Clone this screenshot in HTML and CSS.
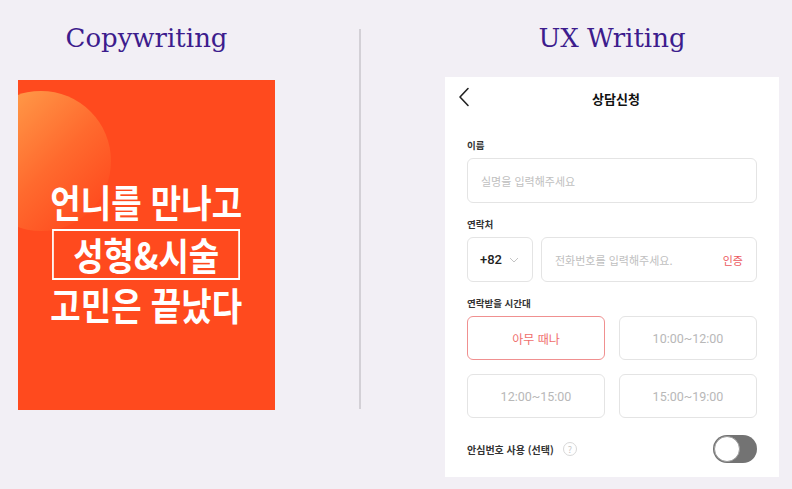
FILE: index.html
```html
<!DOCTYPE html>
<html lang="ko">
<head>
    <meta charset="UTF-8">
    <meta name="viewport" content="width=device-width, initial-scale=1.0">
    <title>Copywriting vs UX Writing</title>
    <link rel="stylesheet" href="styles.css">
</head>
<body>
    <div class="page">
        <!-- Copywriting -->
        <section class="col-left">
            <h1 class="title">Copywriting</h1>
            <div class="ad-card">
                <div class="ad-text">
                    <div class="ad-line">언니를 만나고</div>
                    <div class="ad-box">성형&amp;시술</div>
                    <div class="ad-line">고민은 끝났다</div>
                </div>
            </div>
        </section>

        <div class="divider"></div>

        <!-- UX Writing -->
        <section class="col-right">
            <h1 class="title">UX Writing</h1>
            <div class="form-card">
                <div class="form-header">
                    <svg class="back" width="12" height="20" viewBox="0 0 12 20">
                        <path d="M10 1.5 L2 10 L10 18.5" fill="none" stroke="#222" stroke-width="1.6" stroke-linecap="round" stroke-linejoin="round"/>
                    </svg>
                    <div class="form-title">상담신청</div>
                </div>

                <div class="label first">이름</div>
                <div class="field">실명을 입력해주세요</div>

                <div class="label">연락처</div>
                <div class="phone-row">
                    <div class="field code">
                        <span>+82</span>
                        <svg width="10" height="6" viewBox="0 0 10 6">
                            <path d="M1 1 L5 5 L9 1" fill="none" stroke="#c4c4c4" stroke-width="1"/>
                        </svg>
                    </div>
                    <div class="field phone">
                        <span>전화번호를 입력해주세요.</span>
                        <span class="verify">인증</span>
                    </div>
                </div>

                <div class="label">연락받을 시간대</div>
                <div class="time-grid">
                    <div class="time selected">아무 때나</div>
                    <div class="time">10:00~12:00</div>
                    <div class="time">12:00~15:00</div>
                    <div class="time">15:00~19:00</div>
                </div>

                <div class="safe-row">
                    <div class="safe-label">
                        안심번호 사용 (선택)
                        <span class="help">?</span>
                    </div>
                    <div class="toggle"><span class="knob"></span></div>
                </div>
            </div>
        </section>
    </div>
</body>
</html>
```

FILE: styles.css
```css
body {
    margin: 0;
    background-color: #f2eff5;
    font-family: "Noto Sans CJK KR", "Noto Sans", sans-serif;
}
.page {
    display: flex;
    align-items: flex-start;
    padding-left: 18px;
}
.title {
    margin: 20px 0 0 0;
    font-family: "DejaVu Serif", serif;
    font-weight: normal;
    font-size: 26px;
    line-height: 36px;
    color: #3d1c8d;
    text-align: center;
}

/* left */
.col-left {
    width: 257px;
}
.ad-card {
    position: relative;
    overflow: hidden;
    margin-top: 24px;
    height: 330px;
    background-color: #ff4a1e;
    display: flex;
    align-items: center;
    justify-content: center;
}
.ad-card::before {
    content: "";
    position: absolute;
    left: -47px;
    top: 11px;
    width: 140px;
    height: 140px;
    border-radius: 50%;
    background: linear-gradient(135deg, #ff9a48 15%, #ff6a2e 55%, #ff4e20 85%);
}
.ad-text {
    position: relative;
    display: flex;
    flex-direction: column;
    align-items: center;
    padding-top: 14px;
    color: #fff;
    font-weight: bold;
    font-size: 38px;
    transform: scaleX(0.87);
}
.ad-line {
    line-height: 40px;
}
.ad-box {
    margin: 8px 0 4px 0;
    width: 212px;
    height: 47px;
    border: 2px solid #fff;
    line-height: 46px;
    text-align: center;
}

.divider {
    width: 2px;
    height: 380px;
    margin: 29px 0 0 84px;
    background-color: #d3d0d6;
}

/* right */
.col-right {
    width: 334px;
    margin-left: 84px;
}
.form-card {
    margin-top: 21px;
    background-color: #fff;
    padding: 0 22px 14px 22px;
}
.form-header {
    position: relative;
    height: 42px;
    display: flex;
    align-items: center;
    justify-content: center;
}
.back {
    position: absolute;
    left: -9px;
    top: 10px;
}
.form-title {
    font-size: 13px;
    font-weight: bold;
    color: #111;
    padding-left: 8px;
}
.label {
    margin: 14px 0 6px 0;
    font-size: 9.5px;
    line-height: 14px;
    font-weight: bold;
    color: #333;
}
.label.first {
    margin-top: 19px;
}
.field {
    box-sizing: border-box;
    height: 45px;
    border: 1px solid #e4e4e4;
    border-radius: 6px;
    padding: 0 13px;
    display: flex;
    align-items: center;
    font-size: 11px;
    color: #c0c0c0;
}
.phone-row {
    display: flex;
    gap: 8px;
}
.code {
    width: 66px;
    justify-content: space-between;
    padding: 0 13px 0 12px;
    font-family: Roboto, "Noto Sans CJK KR", sans-serif;
    font-size: 13px;
    font-weight: 500;
    color: #222;
}
.phone {
    flex: 1;
    justify-content: space-between;
}
.verify {
    color: #ec5a5f;
}
.time-grid {
    display: grid;
    grid-template-columns: 1fr 1fr;
    gap: 14px;
}
.time {
    box-sizing: border-box;
    height: 44px;
    border: 1px solid #e4e4e4;
    border-radius: 6px;
    display: flex;
    align-items: center;
    justify-content: center;
    font-family: Roboto, "Noto Sans CJK KR", sans-serif;
    font-size: 12.5px;
    color: #b8b8b8;
}
.time.selected {
    border: 1.5px solid #f09090;
    color: #ef6e6c;
    font-family: "Noto Sans CJK KR", sans-serif;
    font-size: 12px;
}
.safe-row {
    margin-top: 17px;
    display: flex;
    align-items: center;
    justify-content: space-between;
}
.safe-label {
    display: flex;
    align-items: center;
    font-size: 10px;
    font-weight: bold;
    color: #333;
}
.help {
    box-sizing: border-box;
    margin-left: 9px;
    width: 14px;
    height: 14px;
    border: 1px solid #d8d8d8;
    border-radius: 50%;
    display: flex;
    align-items: center;
    justify-content: center;
    font-size: 9px;
    font-weight: normal;
    color: #c8c8c8;
}
.toggle {
    box-sizing: border-box;
    width: 44px;
    height: 28px;
    border-radius: 14px;
    background-color: #737373;
    padding: 1px;
}
.knob {
    display: block;
    box-sizing: border-box;
    width: 26px;
    height: 26px;
    border-radius: 50%;
    background-color: #fff;
    border: 1px solid #9a9a9a;
}
```
